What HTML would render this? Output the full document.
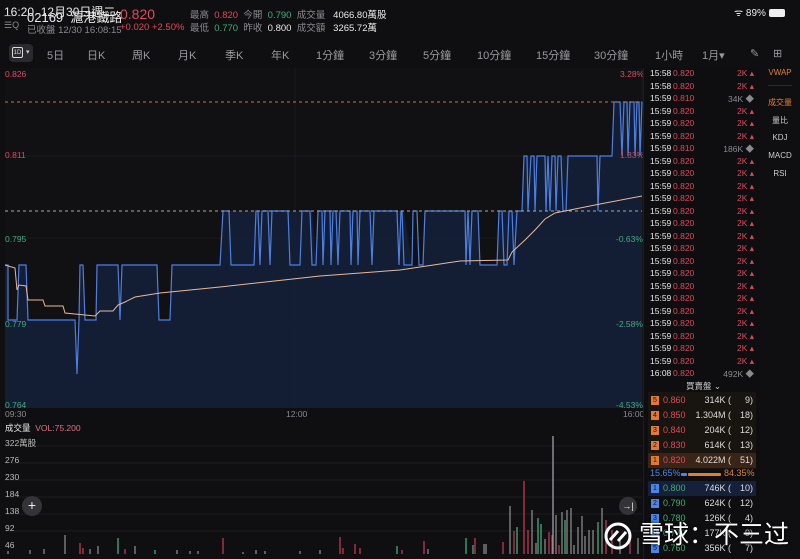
<!DOCTYPE html>
<html><head><meta charset="utf-8">
<style>
*{margin:0;padding:0;box-sizing:border-box}
body{width:800px;height:559px;background:#0f0f11;color:#ddd;font-family:"Liberation Sans","Noto Sans CJK TC",sans-serif;position:relative;overflow:hidden}
.a{position:absolute;white-space:nowrap}
.r{color:#e0495b}.g{color:#3fae78}.gr{color:#8a8a90}.w{color:#e8e8e8}
.tabs span{position:absolute;top:47px;font-size:11px;color:#9a9a9f}
.tk{position:absolute;left:648px;width:108px;font-size:8.5px;height:12px}
.tk b{font-weight:normal;position:absolute}
.ob{position:absolute;left:648px;width:108px;height:15px;font-size:9px}
.ob i{font-style:normal;position:absolute;left:3px;top:3px;width:8px;height:9px;font-size:7px;line-height:9px;text-align:center;color:#111}
.ob .p{position:absolute;left:15px;top:2px}
.ob .v{position:absolute;right:25px;top:2px;color:#ddd}
.ob .n{position:absolute;right:3px;top:2px;color:#ddd}
.side span{position:absolute;left:760px;width:40px;text-align:center;font-size:8px;color:#ccc}
</style></head><body>
<div class="a w" style="left:4px;top:3px;font-size:12px">16:20&nbsp;&nbsp;12月30日週二</div>
<div class="a w" style="left:27px;top:7px;font-size:13px">02169&nbsp;&nbsp;滬港鐵路</div>
<div class="a r" style="left:120px;top:6px;font-size:14px">0.820</div>
<div class="a gr" style="left:27px;top:22px;font-size:9.5px">已收盤 12/30 16:08:15</div>
<div class="a r" style="left:120px;top:22px;font-size:9.5px">+0.020 +2.50%</div>
<div class="a gr" style="left:4px;top:10px;font-size:9px">—<br>☰Q</div>
<div class="a" style="left:190px;top:9px;font-size:9.5px;line-height:13px">
<span class="gr">最高</span>&nbsp;&nbsp;<span class="r">0.820</span>&nbsp;&nbsp;<span class="gr">今開</span>&nbsp;&nbsp;<span class="g">0.790</span>&nbsp;&nbsp;<span class="gr">成交量</span>&nbsp;&nbsp;&nbsp;<span class="w">4066.80萬股</span><br>
<span class="gr">最低</span>&nbsp;&nbsp;<span class="g">0.770</span>&nbsp;&nbsp;<span class="gr">昨收</span>&nbsp;&nbsp;<span class="w">0.800</span>&nbsp;&nbsp;<span class="gr">成交額</span>&nbsp;&nbsp;&nbsp;<span class="w">3265.72萬</span></div>
<div class="a w" style="left:734px;top:5px;font-size:10px">ᯤ 89% <span style="display:inline-block;width:16px;height:8px;background:#eee;border-radius:2px;vertical-align:middle"></span></div>
<div class="tabs">
<div class="a" style="left:9px;top:44px;width:24px;height:18px;background:#2a2a2e;border-radius:4px"></div>
<div class="a" style="left:12px;top:47px;width:11px;height:11px;border:1px solid #ddd;border-radius:2px;font-size:6px;color:#ddd;text-align:center;line-height:10px">1D</div>
<div class="a" style="left:26px;top:48px;font-size:7px;color:#ccc">▾</div>
<span style="left:47px">5日</span><span style="left:87px">日K</span><span style="left:132px">周K</span><span style="left:178px">月K</span><span style="left:225px">季K</span><span style="left:271px">年K</span><span style="left:316px">1分鐘</span><span style="left:369px">3分鐘</span><span style="left:423px">5分鐘</span><span style="left:477px">10分鐘</span><span style="left:536px">15分鐘</span><span style="left:594px">30分鐘</span><span style="left:655px">1小時</span><span style="left:702px">1月▾</span><span style="left:750px">✎</span><span style="left:773px">⊞</span>
</div>
<svg class="a" style="left:0;top:0" width="800" height="559">
<rect x="5" y="68" width="637" height="340" fill="#111114"/>
<g stroke="#1c1c20" stroke-width="1">
<line x1="5" y1="156" x2="642" y2="156"/><line x1="5" y1="238" x2="642" y2="238"/><line x1="5" y1="323" x2="642" y2="323"/>
<line x1="295" y1="68" x2="295" y2="408"/><line x1="642" y1="68" x2="642" y2="408"/>
<line x1="5" y1="446" x2="642" y2="446"/><line x1="5" y1="463" x2="642" y2="463"/><line x1="5" y1="480" x2="642" y2="480"/><line x1="5" y1="497" x2="642" y2="497"/><line x1="5" y1="514" x2="642" y2="514"/><line x1="5" y1="531" x2="642" y2="531"/>
</g>
<path d="M5,265 L8,265 L8,320 L17,320 L19,265 L26,265 L28,320 L75,320 L77,374 L79,320 L80,265 L83,265 L85,320 L96,320 L97,265 L118,265 L120,320 L122,265 L157,265 L159,320 L170,320 L172,265 L220,265 L223,211 L312,211 L316,265 L318,211 L404,211 L412,265 L423,265 L425,211 L478,211 L480,265 L497,265 L499,211 L522,211 L524,156 L612,156 L614,102 L642,102 L642,408 L5,408 Z" fill="#142036" opacity="0.95"/>
<path d="M5,265 L8,265 L8,320 L17,320 L19,265 L26,265 L28,320 L75,320 L77,374 L79,320 L80,265 L83,265 L85,320 L96,320 L97,265 L118,265 L120,320 L122,265 L157,265 L159,320 L170,320 L172,265 L220,265 L223,211 L229,211 L231,265 L254,265 L256,211 L258,211 L260,265 L262,211 L268,211 L270,265 L272,211 L288,211 L290,265 L300,265 L302,211 L310,211 L312,265 L316,265 L318,211 L322,211 L323,265 L325,211 L330,211 L331,265 L333,211 L336,211 L338,265 L340,211 L350,211 L351,265 L353,211 L357,211 L358,265 L360,211 L370,211 L372,265 L374,211 L397,211 L399,265 L401,211 L402,211 L404,265 L412,265 L413,211 L417,211 L419,265 L423,265 L425,211 L465,211 L466,265 L468,211 L470,265 L472,211 L478,211 L480,265 L497,265 L499,211 L502,211 L504,265 L507,265 L509,211 L512,211 L514,265 L517,211 L522,211 L524,156 L527,156 L528,211 L531,156 L534,156 L535,211 L537,156 L545,156 L546,211 L548,156 L550,211 L552,156 L555,156 L556,211 L558,156 L561,156 L563,211 L566,211 L568,156 L597,156 L598,211 L600,156 L612,156 L614,102 L620,102 L622,156 L624,102 L627,102 L628,156 L630,102 L634,102 L635,156 L637,102 L639,102 L640,156 L642,102" fill="none" stroke="#4d7fe0" stroke-width="1.2"/>
<line x1="5" y1="102" x2="642" y2="102" stroke="#d9703a" stroke-dasharray="3,3" stroke-width="1"/>
<line x1="5" y1="211" x2="642" y2="211" stroke="#aaa" stroke-dasharray="3,3" stroke-width="1"/>
<path d="M5,265 L15,268 L17,290 L19,285 L26,286 L28,300 L43,300 L45,306 L63,306 L65,313 L95,316 L100,311 L113,311 L118,305 L125,302 L135,297 L160,293 L220,287 L320,276 L400,270 L460,261 L508,260 L512,252 L525,240 L535,230 L545,219 L555,213 L570,210 L600,204 L642,196" fill="none" stroke="#e8b899" stroke-width="1"/>
<g stroke-width="1.3">
<line x1="8" y1="554" x2="8" y2="551" stroke="#888"/><line x1="30" y1="554" x2="30" y2="550" stroke="#888"/><line x1="44" y1="554" x2="44" y2="549" stroke="#888"/><line x1="65" y1="554" x2="65" y2="535" stroke="#888"/><line x1="80" y1="554" x2="80" y2="543" stroke="#c03a50"/><line x1="83" y1="554" x2="83" y2="548" stroke="#c03a50"/><line x1="90" y1="554" x2="90" y2="549" stroke="#888"/><line x1="98" y1="554" x2="98" y2="546" stroke="#888"/><line x1="118" y1="554" x2="118" y2="538" stroke="#3fae78"/><line x1="125" y1="554" x2="125" y2="549" stroke="#c03a50"/><line x1="135" y1="554" x2="135" y2="546" stroke="#888"/><line x1="155" y1="554" x2="155" y2="550" stroke="#3fae78"/><line x1="177" y1="554" x2="177" y2="550" stroke="#888"/><line x1="190" y1="554" x2="190" y2="551" stroke="#888"/><line x1="198" y1="554" x2="198" y2="551" stroke="#888"/><line x1="223" y1="554" x2="223" y2="538" stroke="#c03a50"/><line x1="243" y1="554" x2="243" y2="552" stroke="#888"/><line x1="256" y1="554" x2="256" y2="550" stroke="#888"/><line x1="265" y1="554" x2="265" y2="551" stroke="#888"/><line x1="300" y1="554" x2="300" y2="551" stroke="#888"/><line x1="320" y1="554" x2="320" y2="550" stroke="#888"/><line x1="340" y1="554" x2="340" y2="537" stroke="#c03a50"/><line x1="343" y1="554" x2="343" y2="548" stroke="#c03a50"/><line x1="355" y1="554" x2="355" y2="544" stroke="#c03a50"/><line x1="360" y1="554" x2="360" y2="548" stroke="#c03a50"/><line x1="397" y1="554" x2="397" y2="546" stroke="#3fae78"/><line x1="402" y1="554" x2="402" y2="550" stroke="#c03a50"/><line x1="424" y1="554" x2="424" y2="541" stroke="#c03a50"/><line x1="428" y1="554" x2="428" y2="549" stroke="#888"/><line x1="466" y1="554" x2="466" y2="538" stroke="#3fae78"/><line x1="473" y1="554" x2="473" y2="545" stroke="#3fae78"/><line x1="475" y1="554" x2="475" y2="538" stroke="#c03a50"/><line x1="484" y1="554" x2="484" y2="544" stroke="#888"/><line x1="486" y1="554" x2="486" y2="544" stroke="#888"/><line x1="503" y1="554" x2="503" y2="542" stroke="#c03a50"/><line x1="510" y1="554" x2="510" y2="506" stroke="#888"/><line x1="514" y1="554" x2="514" y2="531" stroke="#c03a50"/><line x1="517" y1="554" x2="517" y2="527" stroke="#3fae78"/><line x1="524" y1="554" x2="524" y2="481" stroke="#c03a50"/><line x1="528" y1="554" x2="528" y2="530" stroke="#c03a50"/><line x1="532" y1="554" x2="532" y2="510" stroke="#888"/><line x1="536" y1="554" x2="536" y2="543" stroke="#888"/><line x1="538" y1="554" x2="538" y2="518" stroke="#3fae78"/><line x1="541" y1="554" x2="541" y2="524" stroke="#3fae78"/><line x1="545" y1="554" x2="545" y2="539" stroke="#888"/><line x1="549" y1="554" x2="549" y2="532" stroke="#c03a50"/><line x1="552" y1="554" x2="552" y2="535" stroke="#c03a50"/><line x1="553" y1="554" x2="553" y2="436" stroke="#a0a0aa"/><line x1="556" y1="554" x2="556" y2="515" stroke="#888"/><line x1="559" y1="554" x2="559" y2="545" stroke="#c03a50"/><line x1="562" y1="554" x2="562" y2="512" stroke="#888"/><line x1="565" y1="554" x2="565" y2="520" stroke="#3fae78"/><line x1="567" y1="554" x2="567" y2="510" stroke="#888"/><line x1="571" y1="554" x2="571" y2="508" stroke="#888"/><line x1="574" y1="554" x2="574" y2="545" stroke="#888"/><line x1="578" y1="554" x2="578" y2="527" stroke="#888"/><line x1="582" y1="554" x2="582" y2="516" stroke="#888"/><line x1="585" y1="554" x2="585" y2="536" stroke="#888"/><line x1="589" y1="554" x2="589" y2="530" stroke="#888"/><line x1="593" y1="554" x2="593" y2="530" stroke="#888"/><line x1="598" y1="554" x2="598" y2="522" stroke="#3fae78"/><line x1="602" y1="554" x2="602" y2="508" stroke="#888"/><line x1="606" y1="554" x2="606" y2="520" stroke="#c03a50"/><line x1="612" y1="554" x2="612" y2="530" stroke="#c03a50"/><line x1="620" y1="554" x2="620" y2="540" stroke="#888"/><line x1="630" y1="554" x2="630" y2="535" stroke="#c03a50"/><line x1="638" y1="554" x2="638" y2="538" stroke="#888"/>
</g>
</svg>
<div class="a r" style="left:5px;top:69px;font-size:8.5px">0.826</div>
<div class="a r" style="left:5px;top:150px;font-size:8.5px">0.811</div>
<div class="a g" style="left:5px;top:234px;font-size:8.5px">0.795</div>
<div class="a g" style="left:5px;top:319px;font-size:8.5px">0.779</div>
<div class="a g" style="left:5px;top:400px;font-size:8.5px">0.764</div>
<div class="a r" style="left:620px;top:69px;font-size:8.5px">3.28%</div>
<div class="a" style="left:620px;top:150px;font-size:8.5px;color:#c0506f">1.33%</div>
<div class="a g" style="left:616px;top:234px;font-size:8.5px">-0.63%</div>
<div class="a g" style="left:616px;top:319px;font-size:8.5px">-2.58%</div>
<div class="a g" style="left:616px;top:400px;font-size:8.5px">-4.53%</div>
<div class="a gr" style="left:5px;top:409px;font-size:8.5px">09:30</div>
<div class="a gr" style="left:286px;top:409px;font-size:8.5px">12:00</div>
<div class="a gr" style="left:623px;top:409px;font-size:8.5px">16:00</div>
<div class="a" style="left:5px;top:422px;font-size:8.5px"><span class="w">成交量</span>&nbsp;&nbsp;<span style="color:#e07080">VOL:75.200</span></div>
<div class="a" style="left:5px;top:435px;font-size:8.5px;color:#bbb;line-height:17px">322萬股<br>276<br>230<br>184<br>138<br>92<br>46</div>
<div class="a" style="left:22px;top:496px;width:20px;height:20px;border-radius:10px;background:#333338;color:#eee;font-size:14px;text-align:center;line-height:19px">+</div>
<div class="a" style="left:619px;top:497px;width:18px;height:18px;border-radius:9px;background:#333338;color:#eee;font-size:9px;text-align:center;line-height:18px">→|</div>
<div class="a" style="left:643px;top:68px;width:117px;height:491px;background:#0e0e10;border-left:1px solid #1e1e22"></div>
<div style="position:absolute;left:0;top:0;font-size:8.5px">
<div class="tk" style="top:68px"><b class="w" style="left:2px">15:58</b><b class="r" style="left:25px">0.820</b><b class="r" style="right:2px">2K ▴</b></div>
<div class="tk" style="top:80.5px"><b class="w" style="left:2px">15:58</b><b class="r" style="left:25px">0.820</b><b class="r" style="right:2px">2K ▴</b></div>
<div class="tk" style="top:93px"><b class="w" style="left:2px">15:59</b><b class="r" style="left:25px">0.810</b><b class="gr" style="right:2px">34K ◆</b></div>
<div class="tk" style="top:105.5px"><b class="w" style="left:2px">15:59</b><b class="r" style="left:25px">0.820</b><b class="r" style="right:2px">2K ▴</b></div>
<div class="tk" style="top:118px"><b class="w" style="left:2px">15:59</b><b class="r" style="left:25px">0.820</b><b class="r" style="right:2px">2K ▴</b></div>
<div class="tk" style="top:130.5px"><b class="w" style="left:2px">15:59</b><b class="r" style="left:25px">0.820</b><b class="r" style="right:2px">2K ▴</b></div>
<div class="tk" style="top:143px"><b class="w" style="left:2px">15:59</b><b class="r" style="left:25px">0.810</b><b class="gr" style="right:2px">186K ◆</b></div>
<div class="tk" style="top:155.5px"><b class="w" style="left:2px">15:59</b><b class="r" style="left:25px">0.820</b><b class="r" style="right:2px">2K ▴</b></div>
<div class="tk" style="top:168px"><b class="w" style="left:2px">15:59</b><b class="r" style="left:25px">0.820</b><b class="r" style="right:2px">2K ▴</b></div>
<div class="tk" style="top:180.5px"><b class="w" style="left:2px">15:59</b><b class="r" style="left:25px">0.820</b><b class="r" style="right:2px">2K ▴</b></div>
<div class="tk" style="top:193px"><b class="w" style="left:2px">15:59</b><b class="r" style="left:25px">0.820</b><b class="r" style="right:2px">2K ▴</b></div>
<div class="tk" style="top:205.5px"><b class="w" style="left:2px">15:59</b><b class="r" style="left:25px">0.820</b><b class="r" style="right:2px">2K ▴</b></div>
<div class="tk" style="top:218px"><b class="w" style="left:2px">15:59</b><b class="r" style="left:25px">0.820</b><b class="r" style="right:2px">2K ▴</b></div>
<div class="tk" style="top:230.5px"><b class="w" style="left:2px">15:59</b><b class="r" style="left:25px">0.820</b><b class="r" style="right:2px">2K ▴</b></div>
<div class="tk" style="top:243px"><b class="w" style="left:2px">15:59</b><b class="r" style="left:25px">0.820</b><b class="r" style="right:2px">2K ▴</b></div>
<div class="tk" style="top:255.5px"><b class="w" style="left:2px">15:59</b><b class="r" style="left:25px">0.820</b><b class="r" style="right:2px">2K ▴</b></div>
<div class="tk" style="top:268px"><b class="w" style="left:2px">15:59</b><b class="r" style="left:25px">0.820</b><b class="r" style="right:2px">2K ▴</b></div>
<div class="tk" style="top:280.5px"><b class="w" style="left:2px">15:59</b><b class="r" style="left:25px">0.820</b><b class="r" style="right:2px">2K ▴</b></div>
<div class="tk" style="top:293px"><b class="w" style="left:2px">15:59</b><b class="r" style="left:25px">0.820</b><b class="r" style="right:2px">2K ▴</b></div>
<div class="tk" style="top:305.5px"><b class="w" style="left:2px">15:59</b><b class="r" style="left:25px">0.820</b><b class="r" style="right:2px">2K ▴</b></div>
<div class="tk" style="top:318px"><b class="w" style="left:2px">15:59</b><b class="r" style="left:25px">0.820</b><b class="r" style="right:2px">2K ▴</b></div>
<div class="tk" style="top:330.5px"><b class="w" style="left:2px">15:59</b><b class="r" style="left:25px">0.820</b><b class="r" style="right:2px">2K ▴</b></div>
<div class="tk" style="top:343px"><b class="w" style="left:2px">15:59</b><b class="r" style="left:25px">0.820</b><b class="r" style="right:2px">2K ▴</b></div>
<div class="tk" style="top:355.5px"><b class="w" style="left:2px">15:59</b><b class="r" style="left:25px">0.820</b><b class="r" style="right:2px">2K ▴</b></div>
<div class="tk" style="top:368px"><b class="w" style="left:2px">16:08</b><b class="r" style="left:25px">0.820</b><b class="gr" style="right:2px">492K ◆</b></div>
</div>
<div class="a" style="left:686px;top:380px;font-size:8.5px;color:#ccc">買賣盤 ⌄</div>
<div class="a" style="left:648px;top:392px;width:108px;height:77px;background:#18140f"></div>
<div class="ob" style="top:393px"><i style="background:#e07a30">5</i><span class="p r">0.860</span><span class="v">314K (</span><span class="n">9)</span></div>
<div class="ob" style="top:408px"><i style="background:#e07a30">4</i><span class="p r">0.850</span><span class="v">1.304M (</span><span class="n">18)</span></div>
<div class="ob" style="top:423px"><i style="background:#e07a30">3</i><span class="p r">0.840</span><span class="v">204K (</span><span class="n">12)</span></div>
<div class="ob" style="top:438px"><i style="background:#e07a30">2</i><span class="p r">0.830</span><span class="v">614K (</span><span class="n">13)</span></div>
<div class="ob" style="top:453px;background:#3a2416"><i style="background:#e07a30">1</i><span class="p r">0.820</span><span class="v">4.022M (</span><span class="n">51)</span></div>
<div class="a" style="left:650px;top:468px;font-size:9px;color:#4d85e6">15.65%</div>
<div class="a" style="left:681px;top:473px;width:6px;height:3px;background:#4d85e6;border-radius:1px"></div>
<div class="a" style="left:688px;top:473px;width:33px;height:3px;background:#e0802f;border-radius:1px"></div>
<div class="a" style="left:724px;top:468px;font-size:9px;color:#e0802f">84.35%</div>
<div class="ob" style="top:481px;background:#15203a"><i style="background:#4d85e6">1</i><span class="p g">0.800</span><span class="v">746K (</span><span class="n">10)</span></div>
<div class="ob" style="top:496px"><i style="background:#4d85e6">2</i><span class="p g">0.790</span><span class="v">624K (</span><span class="n">12)</span></div>
<div class="ob" style="top:511px"><i style="background:#4d85e6">3</i><span class="p g">0.780</span><span class="v">126K (</span><span class="n">4)</span></div>
<div class="ob" style="top:526px"><i style="background:#4d85e6">4</i><span class="p g">0.770</span><span class="v">177K (</span><span class="n">9)</span></div>
<div class="ob" style="top:541px"><i style="background:#4d85e6">5</i><span class="p g">0.760</span><span class="v">356K (</span><span class="n">7)</span></div>
<div class="side">
<span style="top:68px;color:#e0802f">VWAP</span>
<div class="a" style="left:768px;top:85px;width:24px;height:1px;background:#2a2a2e"></div>
<span style="top:97px;color:#e0802f">成交量</span>
<span style="top:115px">量比</span>
<span style="top:133px">KDJ</span>
<span style="top:151px">MACD</span>
<span style="top:169px">RSI</span>
</div>
<svg class="a" style="left:603px;top:521px" width="30" height="30"><circle cx="15" cy="15" r="12" fill="none" stroke="#fff" stroke-width="3"/><path d="M7,19 L15,10 M23,11 L15,20" stroke="#fff" stroke-width="3" fill="none"/></svg>
<div class="a" style="left:639px;top:518px;font-size:25px;line-height:30px;color:#fff;font-family:'Noto Sans CJK SC',sans-serif;text-shadow:0 0 3px #000">雪球：不三过</div>
</body></html>
